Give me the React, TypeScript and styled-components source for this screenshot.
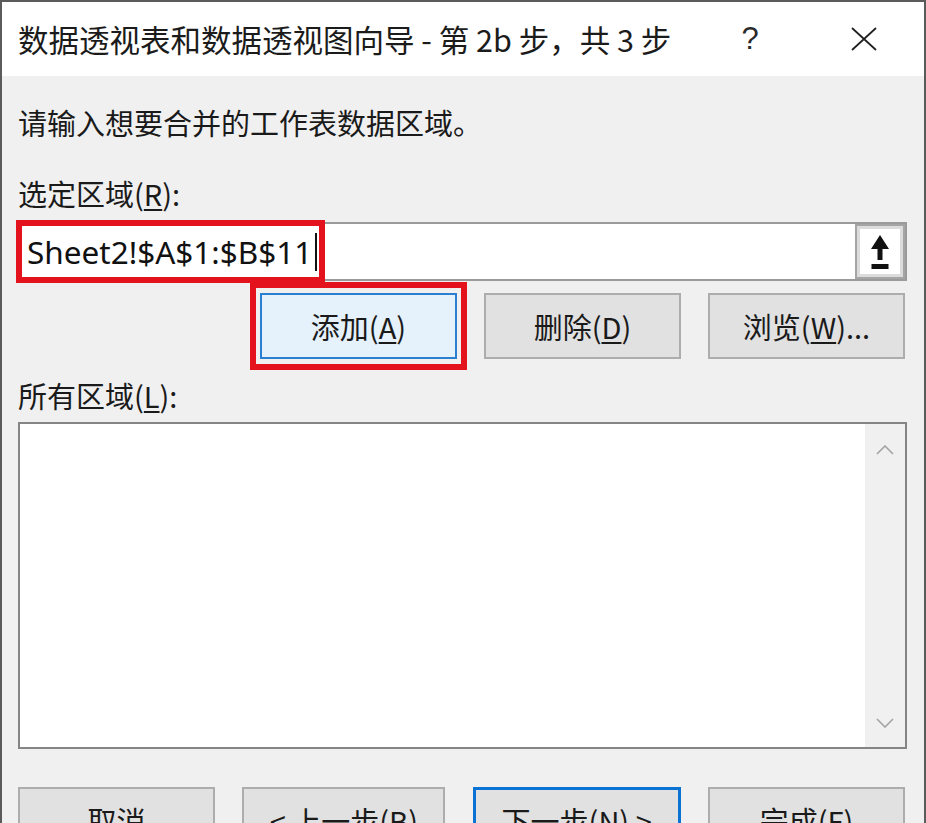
import React from "react";
import styled, { createGlobalStyle } from "styled-components";

const GlobalStyle = createGlobalStyle`
  html, body { margin: 0; padding: 0; background: #f0f0f0; }
  body { font-family: "Noto Sans CJK SC", "Noto Sans", sans-serif; color: #1a1a1a; }
`;

const Window = styled.div`
  width: 926px;
  height: 823px;
  box-sizing: border-box;
  border: 2px solid #5b5b5b;
  border-bottom: none;
  background: #f0f0f0;
  display: flex;
  flex-direction: column;
  overflow: hidden;
`;

const TitleBar = styled.div`
  height: 74px;
  flex-shrink: 0;
  background: #fff;
  display: flex;
  align-items: center;
`;

const Title = styled.div`
  flex: 1;
  padding-left: 16px;
  font-size: 30.5px;
  color: #1b1b1b;
  white-space: nowrap;
`;

const TitleButton = styled.div<{ $w: number }>`
  width: ${(p) => p.$w}px;
  height: 100%;
  display: flex;
  align-items: center;
  justify-content: center;
  font-family: "Liberation Sans", sans-serif;
  font-size: 31px;
  font-weight: 300;
  color: #2a2a2a;
`;

const Body = styled.div`
  flex: 1;
  padding: 26px 17px 0 16px;
  display: flex;
  flex-direction: column;
`;

const Text = styled.div<{ $top: number }>`
  margin-top: ${(p) => p.$top}px;
  font-size: 29px;
  line-height: 40px;
  white-space: nowrap;
`;

const Key = styled.u`
  text-decoration-thickness: 1.5px;
  text-underline-offset: 3px;
`;

const Field = styled.div`
  position: relative;
  margin-top: 9px;
  height: 59px;
  box-sizing: border-box;
  border: 2px solid #9a9a9a;
  background: #fff;
  display: flex;
  align-items: center;
  padding-left: 7px;
`;

const FieldText = styled.span`
  font-family: "Noto Sans", "Open Sans", sans-serif;
  font-size: 31.5px;
  color: #111;
  display: flex;
  align-items: center;
`;

const Caret = styled.span`
  display: inline-block;
  width: 0;
  height: 38px;
  border-left: 2px solid #111;
  margin-left: 3px;
`;

const PickButton = styled.div`
  margin-left: auto;
  align-self: stretch;
  width: 50px;
  box-sizing: border-box;
  border: 2px solid #a5a5a5;
  box-shadow: inset 0 0 0 3px #dcdcdc;
  background: #fff;
  display: flex;
  align-items: center;
  justify-content: center;
`;

const Ring = styled.span<{ $l: number; $t: number; $w: number; $h: number }>`
  position: absolute;
  left: ${(p) => p.$l}px;
  top: ${(p) => p.$t}px;
  width: ${(p) => p.$w}px;
  height: ${(p) => p.$h}px;
  box-sizing: border-box;
  border: 6px solid #e3121c;
  pointer-events: none;
  z-index: 2;
`;

const ButtonRow = styled.div<{ $top: number; $split?: boolean }>`
  margin-top: ${(p) => p.$top}px;
  padding-right: 2px;
  display: flex;
  justify-content: ${(p) => (p.$split ? "space-between" : "flex-end")};
  gap: 27px;
`;

const Marked = styled.div`
  position: relative;
  display: flex;
`;

const Button = styled.div<{ $w: number; $variant?: "focus" | "default" }>`
  width: ${(p) => p.$w}px;
  height: 66px;
  box-sizing: border-box;
  display: flex;
  align-items: center;
  justify-content: center;
  font-size: 29px;
  white-space: nowrap;
  color: #1a1a1a;
  background: ${(p) => (p.$variant === "focus" ? "#e5f1fb" : "#e1e1e1")};
  border: ${(p) =>
    p.$variant === "focus"
      ? "2px solid #2b7fd0"
      : p.$variant === "default"
      ? "3px solid #0a72d2"
      : "2px solid #adadad"};
`;

const List = styled.div`
  margin-top: 7px;
  height: 327px;
  box-sizing: border-box;
  border: 2px solid #858585;
  display: flex;
`;

const ListArea = styled.div`
  flex: 1;
  background: #fff;
`;

const ScrollTrack = styled.div`
  width: 40px;
  background: #f0f0f0;
  display: flex;
  flex-direction: column;
  justify-content: space-between;
  align-items: center;
  padding: 21px 0 19px;
`;

const Chevron = ({ down }: { down?: boolean }) => (
  <svg width="18" height="10" viewBox="0 0 18 10">
    <polyline
      points={down ? "1,1 9,9 17,1" : "1,9 9,1 17,9"}
      fill="none"
      stroke="#a3a3a3"
      strokeWidth="1.6"
    />
  </svg>
);

const CloseIcon = () => (
  <svg width="26" height="24" viewBox="0 0 26 24">
    <path d="M1 1 L25 23 M25 1 L1 23" stroke="#1f1f1f" strokeWidth="1.7" fill="none" />
  </svg>
);

const UploadIcon = () => (
  <svg width="18" height="34" viewBox="0 0 18 34">
    <path d="M9 0 L18 14 L11.5 14 L11.5 25 L6.5 25 L6.5 14 L0 14 Z" fill="#111" />
    <rect x="0.5" y="29" width="17" height="5" fill="#111" />
  </svg>
);

export default function App() {
  return (
    <>
      <GlobalStyle />
      <Window>
        <TitleBar>
          <Title>数据透视表和数据透视图向导 - 第 2b 步，共 3 步</Title>
          <TitleButton $w={108}>?</TitleButton>
          <TitleButton $w={120}>
            <CloseIcon />
          </TitleButton>
        </TitleBar>
        <Body>
          <Text $top={0}>请输入想要合并的工作表数据区域。</Text>
          <Text $top={31}>
            选定区域(<Key>R</Key>):
          </Text>
          <Field>
            <Ring $l={-4} $t={-4} $w={309} $h={63} />
            <FieldText>
              Sheet2!$A$1:$B$11
              <Caret />
            </FieldText>
            <PickButton>
              <UploadIcon />
            </PickButton>
          </Field>
          <ButtonRow $top={12}>
            <Marked>
              <Ring $l={-10} $t={-11} $w={217} $h={88} />
              <Button $w={197} $variant="focus">
                添加(<Key>A</Key>)
              </Button>
            </Marked>
            <Button $w={197}>
              删除(<Key>D</Key>)
            </Button>
            <Button $w={197}>
              浏览(<Key>W</Key>)...
            </Button>
          </ButtonRow>
          <Text $top={16}>
            所有区域(<Key>L</Key>):
          </Text>
          <List>
            <ListArea />
            <ScrollTrack>
              <Chevron />
              <Chevron down />
            </ScrollTrack>
          </List>
          <ButtonRow $top={38} $split>
            <Button $w={197}>取消</Button>
            <Button $w={203}>
              &lt; 上一步(<Key>B</Key>)
            </Button>
            <Button $w={208} $variant="default">
              下一步(<Key>N</Key>) &gt;
            </Button>
            <Button $w={197}>
              完成(<Key>F</Key>)
            </Button>
          </ButtonRow>
        </Body>
      </Window>
    </>
  );
}
